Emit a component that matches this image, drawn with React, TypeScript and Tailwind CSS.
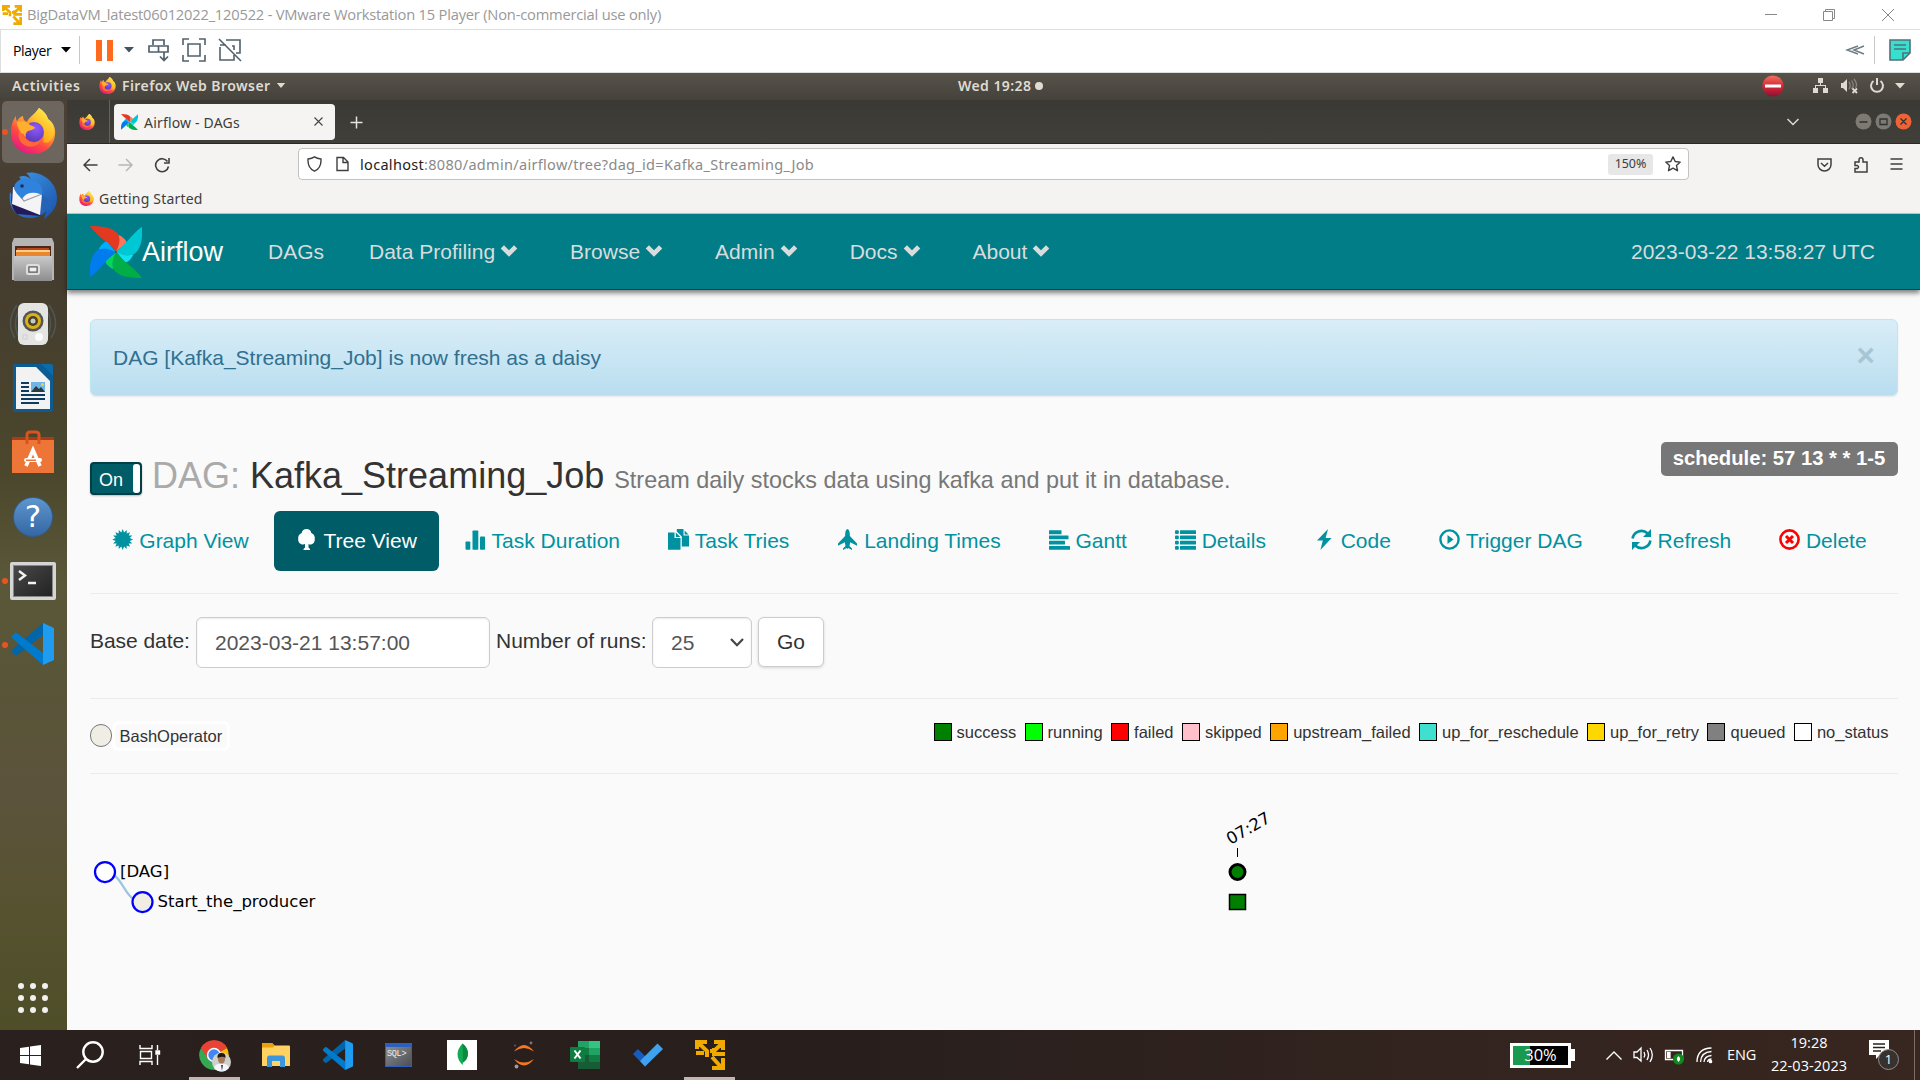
import React from "react";

type P = { className?: string };

/* ---------- logos ---------- */

function Firefox({ className = "", id }: P & { id: string }) {
  return (
    <svg viewBox="0 0 46 46" className={className}>
      <defs>
        <linearGradient id={id + "a"} x1="0.8" y1="0.05" x2="0.25" y2="1">
          <stop offset="0" stopColor="#fff44f" />
          <stop offset="0.35" stopColor="#ffa930" />
          <stop offset="0.65" stopColor="#ff4a41" />
          <stop offset="1" stopColor="#e31587" />
        </linearGradient>
        <radialGradient id={id + "b"} cx="0.6" cy="0.3" r="0.7">
          <stop offset="0" stopColor="#9059ff" />
          <stop offset="1" stopColor="#5b3bb8" />
        </radialGradient>
        <linearGradient id={id + "c"} x1="0.8" y1="0" x2="0.3" y2="1">
          <stop offset="0" stopColor="#fff44f" />
          <stop offset="1" stopColor="#ff980e" />
        </linearGradient>
      </defs>
      <path
        d="M29 0 C34 3 37 7 38 11 C43 14 46 20 45 27 C44 39 34 46 23 46 C10 46 1 37 1 25 C1 19 2 13 6 8 C6 11 6 12 7 13 C9 10 10 9 13 8 C13 11 14 13 17 14 C19 9 24 7 29 0 Z"
        fill={`url(#${id}a)`}
      />
      <path d="M29 0 C34 3 37 7 38 11 C43 15 45 22 43 29 C41 34 36 36 33 34 C36 26 32 18 23 13 C22 8 26 5 29 0 Z" fill={`url(#${id}c)`} />
      <circle cx="24" cy="24" r="10" fill={`url(#${id}b)`} />
      <path d="M7 14 C11 12 18 14 20 17 C23 18 25 19 25 20 C23 22 20 22 18 23 C16 25 15 26 16 29 C11 27 7 20 7 14 Z" fill="#ffae2e" />
      <path d="M14 26 C15 34 24 37 31 32 C29 38 20 41 13 36 C9 33 8 28 9 22 C10 24 12 26 14 26 Z" fill="#ff6a35" />
    </svg>
  );
}

function Pinwheel({ className = "" }: P) {
  const blades: [string, string][] = [
    ["#e43921", "#ff7557"],
    ["#00c7d4", "#11e1ee"],
    ["#00ad46", "#04d659"],
    ["#017cee", "#00adff"],
  ];
  return (
    <svg viewBox="0 0 51 52" preserveAspectRatio="none" className={className}>
      {blades.map(([a, b], i) => (
        <g key={a} transform={`rotate(${i * 90} 25.5 26)`}>
          <path d="M0 0 C14 0 24 2 28 9 C30 16 28 21 25.5 26 C19 17 8 11 0 0 Z" fill={a} />
          <path d="M28 9 C33 11 36 15 36 17 C33 20 28 23 25.5 26 C28 20 30 16 28 9 Z" fill={b} />
        </g>
      ))}
      <circle cx="25.5" cy="26" r="1" fill="#51504f" />
    </svg>
  );
}

function VSCode({ className = "" }: P) {
  return (
    <svg viewBox="0 0 42 42" className={className}>
      <path d="M31 0 L0 27 Q-0.5 28 0 29 L3 32 Q4 32.5 5 32 L31 12 Z" fill="#0065a9" />
      <path d="M31 42 L0 15 Q-0.5 14 0 13 L3 10 Q4 9.5 5 10 L31 30 Z" fill="#007acc" />
      <path d="M31 0 L41 4.5 Q42 5 42 6 V36 Q42 37 41 37.5 L31 42 Z" fill="#1f9cf0" />
    </svg>
  );
}

function VMware({ className = "" }: P) {
  return (
    <svg viewBox="0 0 30 30" className={className} fill="none" stroke="#f0ab00" strokeWidth="4">
      <path d="M2 9 V2 H12 M19 2 H28 V10 M3 2.5 L12 11 V17 M1 13 H9 M28 2.5 L19 11 H15 M19 8 V14 H30" />
      <path d="M17 17 L26 27 M28 18 V28 H17" />
    </svg>
  );
}

/* ---------- Airflow tab glyphs (21 × 21) ---------- */

function Glyph({ name }: { name: string }) {
  const cls = "h-[21px] w-[21px] shrink-0 -mt-[3px]";
  const svg = (c: React.ReactNode) => (
    <svg viewBox="0 0 21 21" className={cls} fill="currentColor">
      {c}
    </svg>
  );
  switch (name) {
    case "burst": {
      const pts: string[] = [];
      for (let i = 0; i < 32; i++) {
        const r = i % 2 ? 7.2 : 10.4;
        const a = (i * Math.PI) / 16;
        pts.push(`${(9.7 + r * Math.sin(a)).toFixed(2)},${(10.5 - r * Math.cos(a)).toFixed(2)}`);
      }
      return (
        <svg viewBox="0 0 21 21" className={cls + " overflow-visible"} fill="currentColor">
          <polygon points={pts.join(" ")} />
        </svg>
      );
    }
    case "tree":
      return svg(<path d="M9.5 0 C12 0 14 1.5 14.3 4 C17 5 18 7 17.8 10 C17.8 13 16.500 15.500 13 15.500 C12 15.500 11.500 15.300 11.500 15 V18.500 L13 20 V20.900 H6.500 V20 L8 18.500 V15 C7.500 15.300 7 15.500 6 15.500 C3 15.500 1 13 1.200 10 C1 7 2 5 4.700 4 C5 1.500 7 0 9.500 0 Z" />);
    case "stats":
      return svg(
        <>
          <rect x="0.5" y="12.5" width="4.8" height="8.3" rx=".8" />
          <rect x="7.5" y="1.5" width="5.8" height="19.3" rx=".8" />
          <rect x="15" y="7.5" width="5" height="13.3" rx=".8" />
        </>
      );
    case "copy":
      return svg(
        <>
          <path d="M0 3.5 H6.5 V9 H12.5 V20.8 H0 Z" />
          <path d="M7.8 3.5 L12.3 8 H7.8 Z" />
          <path d="M8.8 0 H15.5 V6.5 H21 V17.5 H13.8 V7.5 L8.8 2.5 Z" />
          <path d="M16.6 1.5 L20.5 5.4 H16.6 Z" />
        </>
      );
    case "plane":
      return svg(<path d="M10.5 0 C12.300 0.500 12.900 3 12.900 7 L20 14.500 V16.700 L13.200 13.300 L12.500 17 L15 19.500 V20.900 L11.200 19 L10.500 20 L9.800 19 L6 20.900 V19.500 L8.500 17 L7.800 13.300 L1 16.700 V14.500 L8.100 7 C8.100 3 8.700 0.500 10.500 0 Z" />);
    case "align":
      return svg(
        <>
          <rect x="0" y="1.2" width="12.5" height="4" rx=".5" />
          <rect x="0" y="6.5" width="19.5" height="3.8" rx=".5" />
          <rect x="0" y="11.8" width="16" height="3.8" rx=".5" />
          <rect x="0" y="17" width="21" height="3.8" rx=".5" />
        </>
      );
    case "list":
      return svg(
        <>
          {[1.2, 6.5, 11.8, 17].map((y) => (
            <g key={y}>
              <rect x="0" y={y} width="3.8" height="3.7" rx="1" />
              <rect x="5" y={y} width="16" height="3.7" rx=".5" />
            </g>
          ))}
        </>
      );
    case "flash":
      return svg(<path d="M14 0 L3 11.5 H8.8 L6.4 21 L17.600 9 H11.600 Z" />);
    case "play":
      return svg(
        <>
          <circle cx="10.5" cy="10.5" r="9.1" fill="none" stroke="currentColor" strokeWidth="2.4" />
          <path d="M8.5 6 L14.5 10.5 L8.5 15 Z" />
        </>
      );
    case "refresh":
      return svg(
        <>
          <path d="M1.6 9.5 A9 9 0 0 1 16.5 4.2 M19.4 11.5 A9 9 0 0 1 4.5 16.8" fill="none" stroke="currentColor" strokeWidth="2.6" />
          <path d="M20 0 V8 H12 Z M1 21 V13 H9 Z" />
        </>
      );
    default:
      return (
        <svg viewBox="0 0 21 21" className={cls} fill="none" stroke="#ff0000" strokeWidth="2.6">
          <circle cx="10.5" cy="10.5" r="9.1" />
          <path d="M7 7 L14 14 M14 7 L7 14" strokeWidth="3" />
        </svg>
      );
  }
}

/* ---------- VMware window chrome ---------- */

function VMwareChrome() {
  return (
    <>
      <div className="flex h-[29px] shrink-0 items-center bg-white pl-[2px] text-[#999]">
        <VMware className="h-5 w-5" />
        <span className="ml-[5px] w-[700px] whitespace-nowrap font-['Open_Sans',sans-serif] text-[14.7px] tracking-[-0.205px]">
          BigDataVM_latest06012022_120522 - VMware Workstation 15 Player (Non-commercial use only)
        </span>
        <svg viewBox="0 0 130 14" className="mr-[25px] ml-auto h-[14px] w-[130px]" fill="none" stroke="#888">
          <path d="M0 6.5 H12 M58.5 3.5 H67.5 V12.5 H58.5 Z M60.5 3 V1.5 H69.5 V10.5 H68 M117 1 L129 13 M129 1 L117 13" />
        </svg>
      </div>
      <div className="flex h-11 shrink-0 items-center border-y border-l border-[#dedede] bg-white pb-[2px] pl-[12px] text-[#52616b]">
        <span className="w-[48px] font-['Open_Sans',sans-serif] text-[14px] tracking-[-0.3px] text-black">Player</span>
        <svg viewBox="0 0 10 6" className="-mt-[1px] h-[6px] w-[10px]"><path d="M0 0 H10 L5 5.5 Z" fill="#000" /></svg>
        <i className="ml-[8px] h-7 w-px bg-[#c8c8c8]" />
        <i className="ml-[16px] h-[21px] w-[6px] bg-[#ff6a1f]" />
        <i className="ml-[5px] h-[21px] w-[6px] bg-[#ff6a1f]" />
        <svg viewBox="0 0 10 6" className="ml-[11px] h-[6px] w-[10px]"><path d="M0 0 H10 L5 5.5 Z" fill="#47535c" /></svg>
        <svg viewBox="0 0 22 24" className="ml-[14px] h-6 w-[22px]" fill="none" stroke="currentColor" strokeWidth="1.7">
          <path d="M5 7 V2 H16 V7 M1 8 H20 V14 H1 Z M10.5 8 V14 M16 14 V22 M12 18.5 L16 22.5 L20 18.5" />
        </svg>
        <svg viewBox="0 0 24 24" className="ml-[12px] h-6 w-6" fill="none" stroke="currentColor" strokeWidth="1.6">
          <path d="M1 7 V1 H7 M17 1 H23 V7 M23 17 V23 H17 M7 23 H1 V17 M6 6 H18 V18 H6 Z" />
        </svg>
        <svg viewBox="0 0 24 24" className="ml-[12px] h-6 w-6" fill="none" stroke="currentColor" strokeWidth="1.6">
          <path d="M8 2 H22 V15 H18 M2 7 H8 M2 9 V22 H16 V17 M14 8 H16 V12 M1 1 L23 23" />
        </svg>
        <svg viewBox="0 0 20 10" className="ml-auto h-[10px] w-5" fill="none" stroke="#6d7c86" strokeWidth="1.5">
          <path d="M19 1 L9 5 L19 9 M13 1 L2 5 L13 9" />
        </svg>
        <i className="ml-[9px] h-7 w-px bg-[#c8c8c8]" />
        <svg viewBox="0 0 22 22" className="mr-[9px] ml-[14px] h-[22px] w-[22px]" stroke="#52707c" strokeWidth="1.6">
          <path d="M1 1 H21 V14 L14 21 H1 Z" fill="#35e0cd" />
          <path d="M14 21 V14 H21 M5 6 H17 M5 10 H17" fill="none" />
        </svg>
      </div>
    </>
  );
}

function GnomeBar() {
  return (
    <div className="flex h-[27px] shrink-0 items-center bg-gradient-to-b from-[#57534a] to-[#45423c] pb-[2px] pl-[12px] font-['Noto_Sans',sans-serif] text-[14px] font-semibold text-[#dfdbd2]">
      <span className="w-[87px] tracking-[0.6px]">Activities</span>
      <Firefox id="gb" className="h-[17px] w-[17px]" />
      <span className="ml-[6px] w-[154px] whitespace-nowrap tracking-[0.43px]">Firefox Web Browser</span>
      <svg viewBox="0 0 10 6" className="h-[5px] w-[10px]"><path d="M0 0 H10 L5 6 Z" fill="#dfdbd2" /></svg>
      <span className="ml-[672px] w-[76px] whitespace-nowrap tracking-[0.43px]">Wed 19:28</span>
      <i className="ml-[1px] h-2 w-2 rounded-full bg-[#dfdbd2]" />
      <svg viewBox="0 0 22 22" className="mr-[29px] ml-auto h-[22px] w-[22px]">
        <defs>
          <linearGradient id="stop" x1="0" y1="0" x2="0" y2="1">
            <stop offset="0" stopColor="#f0705f" />
            <stop offset="0.5" stopColor="#d52a35" />
            <stop offset="1" stopColor="#8d1035" />
          </linearGradient>
        </defs>
        <circle cx="11" cy="11" r="10.6" fill="url(#stop)" />
        <rect x="3" y="9.5" width="16" height="3" fill="#fff" />
      </svg>
      <svg viewBox="0 0 92 16" className="mr-[15px] h-4 w-[92px]" fill="#dfdbd2">
        <path d="M5 0 H10 V5 H8 V7 H13 V10 H15 V15 H10 V10 H12 V8 H3 V10 H5 V15 H0 V10 H2 V7 H7 V5 H5 Z" />
        <path d="M28 5 H30 L34 1 V14 L30 10 H28 Z" />
        <path d="M36 4 Q38.500 7.500 36 11 M38.500 2.500 Q42 7.500 38.500 11 M41 1 Q45 6 42.500 10" fill="none" stroke="#8a867e" strokeWidth="1.300" />
        <path d="M39.500 10.500 L44 15 M44 10.500 L39.500 15" stroke="#dfdbd2" strokeWidth="1.800" />
        <path d="M60.500 3 A6 6 0 1 0 67.500 3 M64 0 V7" fill="none" stroke="#dfdbd2" strokeWidth="2" />
        <path d="M82 5 H92 L87 10.500 Z" />
      </svg>
    </div>
  );
}

/* ---------- Ubuntu dock ---------- */

function Slot({ pip, active, children }: { pip?: boolean; active?: boolean; children: React.ReactNode }) {
  return (
    <div className={"relative ml-[2px] flex h-[62px] w-[62px] items-center justify-center rounded-[5px] " + (active ? "bg-[#6d665e]" : "")}>
      {pip && <i className="absolute top-[28px] left-0 h-[6px] w-[6px] rounded-full bg-[#e95420]" />}
      {children}
    </div>
  );
}

function Dock() {
  return (
    <div className="flex w-[67px] shrink-0 flex-col gap-[2.1px] bg-[linear-gradient(to_bottom,#4c4137_0%,#443c2f_18%,#4b472c_40%,#5b5739_52%,#595538_62%,#5c533c_75%,#56522f_88%,#4e4e29_100%)] pt-px">
      <Slot pip active>
        <Firefox id="dk" className="-mt-[3px] h-[46px] w-[46px]" />
      </Slot>
      <Slot>
        <svg viewBox="0 0 48 48" className="h-12 w-12">
          <defs>
            <linearGradient id="tb" x1="0" y1="0" x2="1" y2="1">
              <stop offset="0" stopColor="#3d9bea" />
              <stop offset="1" stopColor="#1b4fa8" />
            </linearGradient>
          </defs>
          <path d="M17 1 C30 -2 48 8 48 26 C48 36 42 42 35 47 C36 43 37 41 37 39 C30 48 15 48 7 41 C1 36 0 28 1 20 L4 25 C4 18 7 10 12 7 L10 5 C14 3 20 4 22 8 C20 4 19 2 17 1 Z" fill="url(#tb)" />
          <path d="M5 13 C1 25 1 35 8 42 L32 44 L20 33 Z" fill="#241a5a" />
          <path d="M4 15 L33 22 L31 43 L3 32 Z" fill="#f4f4f6" />
          <path d="M5 16 L15 29 L33 22" fill="none" stroke="#9a9aa3" strokeWidth="1.200" />
          <path d="M5 16 C5 10 12 6 20 7 C29 8 35 15 33 23 C27 20 24 21 21 21 C16 22 14 26 13 27 C10 24 6 20 5 16 Z" fill="#2f83dc" />
          <path d="M33 22 L45 32 L40 33 L43 38 L37 37 L33 43 Z" fill="#2563b8" />
          <circle cx="13" cy="14" r="1.800" fill="#1b2d5c" />
        </svg>
      </Slot>
      <Slot>
        <svg viewBox="0 0 42 44" className="h-11 w-[42px]">
          <defs>
            <linearGradient id="fl" x1="0" y1="0" x2="0" y2="1">
              <stop offset="0" stopColor="#c9c9c9" />
              <stop offset="1" stopColor="#8d8d8d" />
            </linearGradient>
          </defs>
          <path d="M2 0 H40 L42 5 V42 H0 V5 Z" fill="#b5b5b5" />
          <rect x="3" y="8" width="36" height="11" fill="#4b2a1c" />
          <rect x="5" y="10" width="32" height="3" fill="#b6471c" />
          <rect x="4" y="12" width="34" height="2" fill="#ffd08a" />
          <rect x="4" y="14" width="34" height="4" fill="#e9862e" />
          <rect x="2" y="18" width="38" height="25" fill="url(#fl)" />
          <rect x="15" y="27" width="12" height="9" rx="1.500" fill="none" stroke="#dedede" strokeWidth="2" />
          <rect x="17" y="29" width="8" height="5" fill="#eee" stroke="#555" />
        </svg>
      </Slot>
      <Slot>
        <svg viewBox="0 0 48 44" className="h-11 w-12">
          <g fill="none" stroke="#54768a" strokeWidth="1.500" opacity=".45">
            <path d="M8 3 Q-4 20 6 36 M12 5 Q2 20 10 36 M40 3 Q52 20 42 36 M36 5 Q46 20 38 36" />
          </g>
          <rect x="9" y="1" width="30" height="42" rx="6" fill="#e4e4e2" />
          <circle cx="24" cy="19" r="10.500" fill="#555" />
          <circle cx="24" cy="19" r="8" fill="#d8b21a" />
          <circle cx="24" cy="19" r="5" fill="#4a4126" />
          <circle cx="24" cy="19" r="2.500" fill="#c9c9c9" />
          <circle cx="30" cy="35" r="4" fill="#fafafa" />
          <rect x="14" y="33" width="4" height="4" fill="none" stroke="#cfcfcf" />
        </svg>
      </Slot>
      <Slot>
        <svg viewBox="0 0 40 48" className="h-12 w-10">
          <path d="M2 0 H28 L40 12 V46 Q40 48 38 48 H2 Q0 48 0 46 V2 Q0 0 2 0 Z" fill="#0d5b93" />
          <path d="M28 0 H38 Q40 0 40 2 V12 Z" fill="#0c6bab" />
          <path d="M3 3 H23 L37 17 V45 H3 Z" fill="#f2f2f2" />
          <path d="M8 19 H16 M8 23 H16 M8 27 H16 M8 31 H32 M8 35 H32 M8 39 H26" stroke="#0d3c62" strokeWidth="2" />
          <rect x="18" y="18" width="14" height="10" fill="#6fb6e4" />
          <path d="M18 28 L23 22 L26 25 L28 23 L32 28 Z" fill="#2b3a3f" />
          <circle cx="29.500" cy="20.500" r="1.500" fill="#f5cf4b" />
        </svg>
      </Slot>
      <Slot>
        <svg viewBox="0 0 42 44" className="h-11 w-[42px]">
          <path d="M0 7 H42 V12 H0 Z" fill="#a83c14" />
          <path d="M0 10 L42 10 V43 H0 Z" fill="#ee7538" />
          <path d="M15 14 V5 Q15 2 18 2 H24 Q27 2 27 5 V14" fill="none" stroke="#d9531e" strokeWidth="3" />
          <path d="M14 36 L21 20 L28 36 M17 30 H25" fill="none" stroke="#fff" strokeWidth="3.600" />
          <rect x="12" y="28" width="18" height="4" rx="2" fill="#fff" />
          <rect x="14" y="29.500" width="10" height="1.500" fill="#ee7538" />
        </svg>
      </Slot>
      <Slot>
        <div className="flex h-10 w-10 items-center justify-center rounded-full border border-[#2f5f94] bg-gradient-to-b from-[#5f96cf] to-[#3467a3] font-['DejaVu_Sans',sans-serif] text-[31px] leading-none text-white">?</div>
      </Slot>
      <Slot pip>
        <div className="flex h-[38px] w-[46px] items-start rounded-[2px] border-[3px] border-[#d5d5d5] bg-gradient-to-br from-[#4a4a4a] to-[#222] shadow-[inset_0_0_0_1px_#888]">
          <svg viewBox="0 0 20 16" className="mt-[5px] ml-[5px] h-4 w-5" fill="none" stroke="#f2f2f2" strokeWidth="2.400">
            <path d="M1 1 L7 5.500 L1 10 M10 13 H18" />
          </svg>
        </div>
      </Slot>
      <Slot pip>
        <VSCode className="-mt-px h-[42px] w-[42px]" />
      </Slot>
      <div className="mt-auto mb-[17px] ml-[18px] grid w-[30px] grid-cols-3 gap-[6px]">
        {Array.from({ length: 9 }, (_, i) => (
          <i key={i} className="h-[6px] w-[6px] rounded-full bg-[#f2f1ee]" />
        ))}
      </div>
    </div>
  );
}

/* ---------- Firefox chrome ---------- */

function BrowserChrome() {
  return (
    <div className="shrink-0 font-['Noto_Sans',sans-serif] text-[14px] text-[#3d3d3d]">
      <div className="flex h-11 items-center border-b border-[#2a2926] bg-gradient-to-b from-[#3a3934] to-[#403f3a]">
        <Firefox id="pin" className="ml-[12px] h-4 w-4" />
        <i className="ml-[14px] h-full w-px bg-[#65635d]" />
        <div className="ml-[4px] flex h-9 w-[221px] items-center rounded-[4px] bg-[#f5f4f2] pr-[12px] pl-[7px]">
          <Pinwheel className="h-4 w-[17px]" />
          <span className="mt-px ml-[6px] whitespace-nowrap tracking-[0.18px]">Airflow - DAGs</span>
          <svg viewBox="0 0 9 9" className="ml-auto h-[9px] w-[9px]" stroke="#444" strokeWidth="1.100"><path d="M0.500 0.500 L8.500 8.500 M8.500 0.500 L0.500 8.500" /></svg>
        </div>
        <svg viewBox="0 0 13 13" className="mt-px ml-[15px] h-[13px] w-[13px]" stroke="#e6e4df" strokeWidth="1.500"><path d="M6.500 0.500 V12.500 M0.500 6.500 H12.500" /></svg>
        <svg viewBox="0 0 12 8" className="ml-auto h-2 w-3" fill="none" stroke="#dfdbd2" strokeWidth="1.500"><path d="M0.500 1 L6 6.500 L11.500 1" /></svg>
        <svg viewBox="0 0 57 17" className="mr-[8px] ml-[56px] h-[17px] w-[57px]" fill="none">
          <circle cx="8.500" cy="8.500" r="8" fill="#7c7a73" />
          <circle cx="28.500" cy="8.500" r="8" fill="#7c7a73" />
          <circle cx="48.500" cy="8.500" r="8" fill="#ee6235" />
          <path d="M4.500 9 H12.500 M25 6 H32 V11.500 H25 Z M45.500 5.500 L51.500 11.500 M51.500 5.500 L45.500 11.500" stroke="#33312d" strokeWidth="1.300" />
        </svg>
      </div>
      <div className="flex h-10 items-center bg-[#f4f3f1]">
        <svg viewBox="0 0 88 16" className="mt-px ml-[16px] h-4 w-[88px]" fill="none" strokeWidth="1.500">
          <path d="M14.500 8 H1 M7 2 L1 8 L7 14" stroke="#3f3f3f" />
          <path d="M35.500 8 H49 M43 2 L49 8 L43 14" stroke="#b8b7b5" />
          <path d="M84.500 4.500 A6.500 6.500 0 1 0 85.500 9.500 M86 1 V6 H81" stroke="#3f3f3f" strokeWidth="1.600" />
        </svg>
        <div className="ml-[127px] flex h-8 w-[1391px] items-center rounded-[4px] border border-[#c4c3c1] bg-white pl-[8px]">
          <svg viewBox="0 0 42 16" className="h-4 w-[42px]" fill="none" stroke="#3f3f3f" strokeWidth="1.400">
            <path d="M7.500 0.800 Q10 2.500 14 3 Q14.500 12 7.500 15.200 Q0.500 12 1 3 Q5 2.500 7.500 0.800 Z M30 1.500 H36.500 L41 6 V14.500 H30 Z M36 1.500 V6.500 H41" />
          </svg>
          <span className="mt-px ml-[11px] whitespace-nowrap text-[14.500px] text-[#8a8a8a] tracking-[0.31px]">
            <span className="text-[#222]">localhost</span>:8080/admin/airflow/tree?dag_id=Kafka_Streaming_Job
          </span>
          <span className="ml-auto flex h-[21px] w-[45px] items-center justify-center rounded-[3px] bg-[#e7e7e7] text-[12.500px] tracking-[-0.1px]">150%</span>
          <svg viewBox="0 0 16 16" className="mr-[7px] ml-[12px] h-4 w-4" fill="none" stroke="#3f3f3f" strokeWidth="1.400" strokeLinejoin="round">
            <path d="M8 0.900 L10.200 5.500 L15.200 6.100 L11.500 9.600 L12.500 14.700 L8 12.200 L3.500 14.700 L4.500 9.600 L0.800 6.100 L5.800 5.500 Z" />
          </svg>
        </div>
        <svg viewBox="0 0 86 16" className="mt-px mr-[17px] ml-auto h-4 w-[86px]" fill="none" stroke="#3f3f3f" strokeWidth="1.500">
          <path d="M1 2 H14 V7.500 A6.500 6.500 0 0 1 1 7.500 Z M4 6 L7.500 9.300 L11 6" />
          <path d="M38 5 H42 V3 Q42 0.800 44 0.800 Q46 0.800 46 3 V5 H50 V15 H38 V11.500 H40.500 Q42.500 10 40.500 8.500 H38 Z" />
          <path d="M73.500 2 H85.500 M73.500 7 H85.500 M73.500 12 H85.500" />
        </svg>
      </div>
      <div className="flex h-[30px] items-center border-b border-[#c9c8c6] bg-[#f4f3f1] pl-[12px]">
        <Firefox id="bm" className="h-[15px] w-[15px]" />
        <span className="ml-[5px] tracking-[0.2px]">Getting Started</span>
      </div>
    </div>
  );
}

/* ---------- Airflow page ---------- */

const menus = ["Data Profiling", "Browse", "Admin", "Docs", "About"];

const tabs: [string, string][] = [
  ["burst", "Graph View"],
  ["tree", "Tree View"],
  ["stats", "Task Duration"],
  ["copy", "Task Tries"],
  ["plane", "Landing Times"],
  ["align", "Gantt"],
  ["list", "Details"],
  ["flash", "Code"],
  ["play", "Trigger DAG"],
  ["refresh", "Refresh"],
  ["delete", "Delete"],
];

const legend: [string, string][] = [
  ["bg-[#008000]", "success"],
  ["bg-[#00ff00]", "running"],
  ["bg-[#ff0000]", "failed"],
  ["bg-[#ffc0cb]", "skipped"],
  ["bg-[#ffa500]", "upstream_failed"],
  ["bg-[#40e0d0]", "up_for_reschedule"],
  ["bg-[#ffd700]", "up_for_retry"],
  ["bg-[#808080]", "queued"],
  ["bg-white", "no_status"],
];

function AirflowPage() {
  return (
    <div className="flex min-h-0 flex-1 flex-col bg-[#fafafa] font-['Liberation_Sans',Arial,sans-serif] text-[21px] leading-[30px] text-[#333]">
      <nav className="flex h-[76px] shrink-0 items-center border-b border-[#004c54] bg-[#017d87] pl-[23px] text-[#d9dcdc] shadow-[0_3px_5px_rgba(0,0,0,0.5)]">
        <Pinwheel className="h-[52px] w-[52px]" />
        <span className="w-[81px] text-[27px] text-white">Airflow</span>
        <span className="ml-[45px] whitespace-nowrap">DAGs</span>
        <div className="ml-[45px] flex gap-[49px]">
          {menus.map((m) => (
            <span key={m} className="flex items-center whitespace-nowrap">
              {m}
              <svg viewBox="0 0 21 21" className="ml-[5px] h-[21px] w-[21px]" fill="currentColor">
                <path d="M0.700 7.500 L4 4.300 L9 9.200 L14 4.300 L17.300 7.500 L9 15.800 Z" />
              </svg>
            </span>
          ))}
        </div>
        <span className="mr-[45px] ml-auto whitespace-nowrap">2023-03-22 13:58:27 UTC</span>
      </nav>

      <div className="mt-[29px] mr-[22px] ml-[23px] flex h-[77px] shrink-0 items-center rounded-[6px] border border-[#bce8f1] bg-gradient-to-b from-[#d9edf7] to-[#b9def0] px-[22px] text-[#31708f] shadow-[0_1px_2px_rgba(0,0,0,0.08)]">
        <span className="whitespace-nowrap">DAG [Kafka_Streaming_Job] is now fresh as a daisy</span>
        <span className="mt-[-6px] ml-auto text-[31.500px] font-bold text-[#a6c6d5]">×</span>
      </div>

      <div className="mt-[46px] mr-[22px] ml-[23px] flex h-[58px] shrink-0 items-start">
        <div className="mt-[20px] flex h-[33px] w-[52px] justify-between rounded-[4px] border-2 border-[#003f46] bg-[#005c66] pl-[7px] text-[18px] leading-[32px] text-white shadow-[0_1px_2px_rgba(0,0,0,0.25)]">
          On<i className="h-full w-[7px] rounded-[3px] bg-white" />
        </div>
        <h3 className="mt-[14px] ml-[10px] whitespace-nowrap text-[36px] leading-[40px]">
          <span className="text-[#aaa]">DAG:</span> Kafka_Streaming_Job <span className="text-[23.400px] text-[#777]">Stream daily stocks data using kafka and put it in database.</span>
        </h3>
        <span className="ml-auto flex h-[34px] w-[237px] items-center justify-center rounded-[5px] bg-[#777] pr-px pb-[3px] text-[20.250px] font-bold whitespace-nowrap text-white">schedule: 57 13 * * 1-5</span>
      </div>

      <div className="mt-[11px] ml-[23px] flex h-[60px] shrink-0 gap-[3px] text-[#0092a0]">
        {tabs.map(([icon, label]) => (
          <span
            key={label}
            className={"flex items-center gap-[5.800px] rounded-[6px] px-[22.500px] whitespace-nowrap " + (label === "Tree View" ? "bg-[#005c66] text-white" : "")}
          >
            <Glyph name={icon} />
            {label}
          </span>
        ))}
      </div>

      <div className="mt-[22px] mr-[22px] ml-[23px] h-px shrink-0 bg-[#ececec]" />

      <div className="mt-[23px] ml-[23px] flex h-[51px] shrink-0 items-center">
        <span className="w-[106px] whitespace-nowrap pb-[3px] tracking-[-0.05px]">Base date:</span>
        <div className="flex h-full w-[294px] items-center rounded-[6px] border border-[#ccc] bg-white pl-[18px] text-[#555] shadow-[inset_0_1px_2px_rgba(0,0,0,0.075)]">2023-03-21 13:57:00</div>
        <span className="ml-[6px] w-[156px] whitespace-nowrap pb-[3px]">Number of runs:</span>
        <div className="flex h-full w-[100px] items-center rounded-[6px] border border-[#ccc] bg-white pr-[7px] pl-[18px] text-[#555] shadow-[inset_0_1px_2px_rgba(0,0,0,0.075)]">
          25
          <svg viewBox="0 0 14 9" className="ml-auto h-[9px] w-[14px]" fill="none" stroke="#444" strokeWidth="2.200"><path d="M1 1 L7 7.200 L13 1" /></svg>
        </div>
        <div className="mb-px ml-[6px] flex h-[50px] w-[66px] items-center justify-center rounded-[6px] border border-[#ccc] bg-white shadow-[0_1px_3px_rgba(0,0,0,0.15)]">Go</div>
      </div>

      <div className="mt-[30px] mr-[22px] ml-[23px] h-px shrink-0 bg-[#ececec]" />

      <div className="mr-[22px] ml-[23px] flex h-[74px] shrink-0 items-start pt-[22px] text-[16.500px]">
        <i className="mt-[3px] h-[23px] w-[22px] rounded-full border border-[#777] bg-[#f0ede4]" />
        <span className="flex h-[30px] items-center rounded-[7px] border-[3px] border-white px-[4.500px] pb-px">BashOperator</span>
        <div className="mr-[9.500px] ml-auto flex gap-[8.420px]">
          {legend.map(([bg, label]) => (
            <span key={label} className="flex items-start gap-[5px] whitespace-nowrap">
              <i className={"mt-[2px] h-[18px] w-[18px] border border-black " + bg} />
              <span className="leading-[22px]">{label}</span>
            </span>
          ))}
        </div>
      </div>

      <div className="mr-[22px] ml-[23px] h-px shrink-0 bg-[#ececec]" />

      <svg viewBox="67 774 1853 256" className="h-[256px] w-full shrink-0 font-['DejaVu_Sans',sans-serif] text-[16.500px]">
        <path d="M105 872 C123.500 872 123.500 902 142.500 902" fill="none" stroke="#9ac4e0" strokeWidth="2.200" />
        <circle cx="105" cy="872" r="10" fill="#fff" stroke="#0000ff" strokeWidth="2.250" />
        <circle cx="142.500" cy="902" r="10" fill="#f0ede4" stroke="#0000ff" strokeWidth="2.250" />
        <text x="120" y="877">[DAG]</text>
        <text x="157.500" y="907">Start_the_producer</text>
        <path d="M1237.500 848 V857" stroke="#000" />
        <text transform="translate(1230.500 845) rotate(-30)">07:27</text>
        <circle cx="1237.500" cy="872" r="7.500" fill="#008000" stroke="#000" strokeWidth="3" />
        <rect x="1229.500" y="894.500" width="16" height="15" fill="#008000" stroke="#000" strokeWidth="1.500" />
      </svg>
    </div>
  );
}

/* ---------- Windows taskbar ---------- */

function Taskbar() {
  return (
    <div className="flex h-[50px] shrink-0 items-center bg-[linear-gradient(to_right,#2a201e_0%,#281f1d_45%,#33241f_75%,#38261f_100%)] font-['Open_Sans',sans-serif] text-white">
      <svg viewBox="0 0 21 21" className="ml-[20px] h-[21px] w-[21px]" fill="#fff">
        <path d="M0 3 L9 1.700 V10 H0 Z M10 1.500 L21 0 V10 H10 Z M0 11 H9 V19.300 L0 18 Z M10 11 H21 V21 L10 19.500 Z" />
      </svg>
      <svg viewBox="0 0 28 28" className="ml-[35px] h-7 w-7" fill="none" stroke="#fff" strokeWidth="2.400">
        <circle cx="17" cy="11" r="9.700" /><path d="M10 18 L1 27" />
      </svg>
      <svg viewBox="0 0 22 20" className="ml-[35px] h-5 w-[22px]" fill="none" stroke="#fff" strokeWidth="1.400">
        <path d="M1 0 V3.500 H13 V0 M1.500 6.500 H12.500 V13.500 H1.500 Z M1 20 V16.500 H13 V20 M18.500 0 V5 M18.500 10 V20" /><path d="M17 6 H20.500 V9 H17 Z" fill="#fff" />
      </svg>
      <div className="ml-[28px] flex h-full w-[51px] flex-col items-center justify-between pt-[10px]">
        <svg viewBox="0 0 32 32" className="h-8 w-8">
          <path d="M15 15 L2 8 A15 15 0 0 1 28 8 Z" fill="#ea4335" />
          <path d="M15 15 L28 8 A15 15 0 0 1 16 30 Z" fill="#fbbc05" />
          <path d="M15 15 L16 30 A15 15 0 0 1 2 8 Z" fill="#34a853" />
          <path d="M15 8 H28.300 A15 15 0 0 0 2 8 L8.500 18 Z" fill="#ea4335" />
          <circle cx="15" cy="15" r="7.200" fill="#fff" />
          <circle cx="15" cy="15" r="5.700" fill="#4285f4" />
          <circle cx="22.500" cy="22" r="9.500" fill="#cfd0cc" />
          <path d="M15 28 Q16 24 20 24 H25 Q29 24 30 28 Q26 32 22.500 31.500 Q18 31.500 15 28 Z" fill="#f4f6fb" />
          <path d="M22 25 L23 31 L24 25 Z" fill="#345" />
          <ellipse cx="22.500" cy="19" rx="3.600" ry="4.600" fill="#a9785a" />
          <path d="M18.500 18 Q18 13 22.500 13 Q27 13 26.500 18 Q24 15.500 18.500 18 Z" fill="#1c1714" />
        </svg>
        <i className="h-[3px] w-full bg-[#c2b6b3]" />
      </div>
      <svg viewBox="0 0 28 24" className="ml-[22px] h-6 w-7">
        <path d="M0 1 Q0 0 1 0 H10 L12.500 2.500 H27 Q28 2.500 28 3.500 V23 H0 Z" fill="#ffd262" />
        <path d="M0 1 Q0 0 1 0 H10 L12.500 2.500 L11 4.500 H0 Z" fill="#e8a20c" />
        <path d="M5 24 V15 Q5 12.500 7.500 12.500 H20.500 Q23 12.500 23 15 V24 H18 V18 H10 V24 Z" fill="#3b96dd" />
      </svg>
      <VSCode className="ml-[33px] h-[30px] w-[30px]" />
      <div className="ml-[32px] h-[24px] w-[27px] border border-t-[4px] border-[#2b5fc0] bg-gradient-to-br from-[#8a8d92] to-[#4d4f54] pl-[1px] font-['Liberation_Mono',monospace] text-[8.500px] leading-[14px] tracking-[-0.3px] text-[#eee]">SQL&gt;</div>
      <svg viewBox="0 0 30 30" className="ml-[35px] h-[30px] w-[30px]">
        <rect width="30" height="30" fill="#fff" />
        <path d="M15.500 3.500 Q21 8 21 13.500 Q21 19 16 22.500 L15.500 25 Q10.500 20 10.500 14 Q10.500 9 15.500 3.500 Z" fill="#13aa52" />
        <path d="M15.500 3.500 Q21 8 21 13.500 Q21 19 16 22.500 Z" fill="#0d8a3f" />
      </svg>
      <svg viewBox="0 0 24 28" className="ml-[35px] h-7 w-6">
        <path d="M2 10.500 Q12 -2.500 22 10.500 Q12 3.500 2 10.500 Z M2 18 Q12 31 22 18 Q12 25 2 18 Z" fill="#f37726" />
        <circle cx="19" cy="2" r="1.400" fill="#767677" /><circle cx="3" cy="4.500" r="1" fill="#616262" /><circle cx="4.500" cy="25.500" r="1.900" fill="#9e9e9e" />
      </svg>
      <svg viewBox="0 0 30 28" className="ml-[34px] h-7 w-[30px]">
        <path d="M8 0 H30 V28 H8 Z" fill="#185c37" />
        <path d="M8 0 H19 V7 H8 Z" fill="#21a366" /><path d="M19 0 H30 V7 H19 Z" fill="#33c481" />
        <path d="M8 7 H19 V14 H8 Z" fill="#107c41" /><path d="M19 7 H30 V14 H19 Z" fill="#21a366" />
        <path d="M19 14 H30 V21 H19 Z" fill="#107c41" />
        <rect y="6" width="15" height="15" rx="1" fill="#107c41" />
        <path d="M4.500 9.500 L10.500 17.500 M10.500 9.500 L4.500 17.500" stroke="#fff" strokeWidth="2" />
      </svg>
      <svg viewBox="0 0 30 24" className="ml-[33px] h-6 w-[30px]">
        <path d="M0 11 L5 6 L17 18 L12 23.500 Z" fill="#195abd" />
        <path d="M24.500 0.500 L30 6 L12 23.500 L7 18 Z" fill="#3fa2f0" />
      </svg>
      <div className="ml-[21px] flex h-full w-[51px] flex-col items-center justify-between pt-[10px]">
        <VMware className="h-[30px] w-[30px]" />
        <i className="h-[3px] w-full bg-[#c2b6b3]" />
      </div>

      <div className="ml-auto flex h-[25px] w-[61px] items-center justify-center border-[3px] border-white bg-[linear-gradient(to_right,#1a9a50_30%,#000_30%)] text-[16.500px]">30%</div>
      <i className="h-3 w-1 bg-white" />
      <svg viewBox="0 0 16 9" className="ml-[31px] h-[9px] w-4" fill="none" stroke="#fff" strokeWidth="1.400"><path d="M0.500 8.500 L8 1 L15.500 8.500" /></svg>
      <svg viewBox="0 0 80 20" className="ml-[11px] h-5 w-20" fill="none" stroke="#fff" strokeWidth="1.300">
        <path d="M1 7 H4 L8 3 V16 L4 12.500 H1 Z M11 7 Q12.500 9.500 11 12.500 M14 5 Q17 9.500 14 15 M17 3 Q21.500 9.500 17 17" />
        <path d="M32.500 5.500 H49.500 V14.500 H32.500 Z" /><path d="M34.500 7.500 H37 V12.500 H34.500 Z" fill="#fff" />
        <circle cx="45.500" cy="14" r="5.500" fill="#0f8a1f" stroke="none" /><path d="M45.500 11 Q48 13 47 15 L45.500 17 L44 15 Q43 13 45.500 11 Z" fill="#fff" stroke="none" />
        <path d="M64 17 Q64 3.500 78.500 3 M67.500 17 Q68 7 78.500 6.500 M71 17 Q71.500 11 78.500 10.500 M74.500 17 Q75 14 78.500 14" /><circle cx="77.500" cy="16.500" r="1.200" fill="#fff" />
      </svg>
      <span className="ml-[14px] w-[30px] text-[14.500px] tracking-[-0.1px]">ENG</span>
      <div className="ml-[8px] flex w-[88px] flex-col items-center pb-px text-[14.500px] leading-[22.500px] tracking-[0.05px]">
        <span>19:28</span>
        <span className="whitespace-nowrap">22-03-2023</span>
      </div>
      <div className="relative ml-[16px] h-[30px] w-[32px]">
        <svg viewBox="0 0 20 20" className="h-5 w-5"><path d="M0 0 H20 V15 H11 L7 19 V15 H0 Z" fill="#fff" /><path d="M4 4 H16 M4 7.500 H16 M4 11 H12" stroke="#2b201d" strokeWidth="1.300" /></svg>
        <span className="absolute top-[9px] left-[9px] flex h-[21px] w-[21px] items-center justify-center rounded-full border border-[#8f8f8f] bg-[#38322f] text-[13px]">1</span>
      </div>
      <i className="mr-[5px] ml-[13px] h-full w-px bg-[#7b6e69]" />
    </div>
  );
}

export default function App() {
  return (
    <div className="flex h-[1080px] w-[1920px] flex-col overflow-hidden bg-white">
      <VMwareChrome />
      <GnomeBar />
      <div className="flex min-h-0 flex-1">
        <Dock />
        <div className="flex min-w-0 flex-1 flex-col">
          <BrowserChrome />
          <AirflowPage />
        </div>
      </div>
      <Taskbar />
    </div>
  );
}
